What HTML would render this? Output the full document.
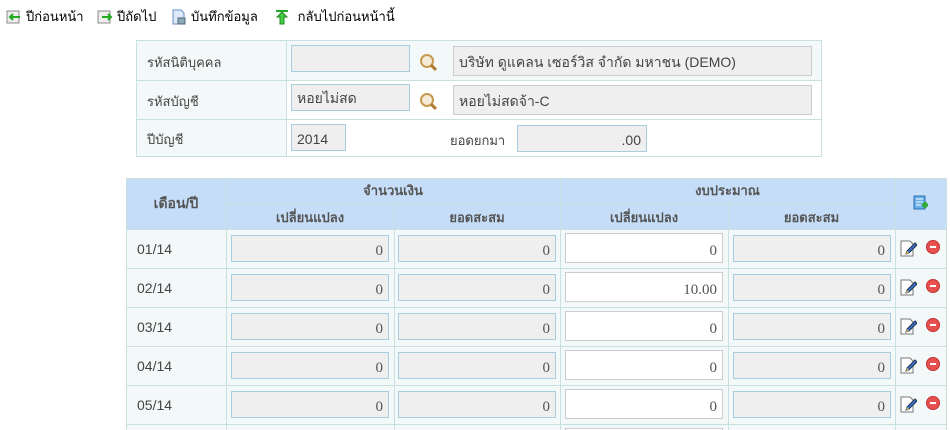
<!DOCTYPE html>
<html style="overflow:hidden;height:430px"><head><meta charset="utf-8"><style>
body{margin:0;width:950px;height:430px;overflow:hidden;background:#fff;font-family:"Liberation Sans","Noto Sans CJK SC",sans-serif;font-size:13px;color:#333;position:relative}
.a{position:absolute;box-sizing:border-box}
.tb{top:6px;font-size:13px;color:#000;display:flex;align-items:center;gap:4px}
.ic{width:16px;height:16px;display:inline-block}
.in{position:absolute;box-sizing:border-box;background:#efefef;border:1px solid #a9cde0;padding:3px 5px 0;display:flex;align-items:center;font-size:14px;color:#444}
.in.n{border-color:#ccc}
.in.w{background:#fff;border-color:#ccc}
.r{justify-content:flex-end;font-family:"Liberation Serif",serif;font-size:15px;color:#555;padding-top:6px}
.line{position:absolute;background:#c8e0e0}
.hd{position:absolute;color:#555;font-weight:bold;font-size:13px;text-align:center}
.lb{position:absolute;font-size:13px;color:#444}
.mag{position:absolute;width:10px;height:10px;border:2px solid #c89a50;border-radius:50%;background:#f4ecd8}
.mag:after{content:"";position:absolute;width:3px;height:7px;background:#b07830;left:10px;top:8px;transform:rotate(-45deg)}
</style></head><body>
<div class="a tb" style="left:6px"><svg class="ic" viewBox="0 0 16 16"><rect x="1" y="2" width="12" height="12" fill="#eee" stroke="#888"/><path d="M4 8h10M7 5l-3 3 3 3" stroke="#2a2" stroke-width="2" fill="none"/></svg>ปีก่อนหน้า</div>
<div class="a tb" style="left:97px"><svg class="ic" viewBox="0 0 16 16"><rect x="1" y="2" width="12" height="12" fill="#eee" stroke="#888"/><path d="M5 8h9M11 5l3 3-3 3" stroke="#2a2" stroke-width="2" fill="none"/></svg>ปีถัดไป</div>
<div class="a tb" style="left:171px"><svg class="ic" viewBox="0 0 16 16"><path d="M2 1h8l3 3v11H2z" fill="#dde8f8" stroke="#6890c8"/><rect x="7" y="9" width="7" height="6" fill="#8ab" stroke="#567"/></svg>บันทึกข้อมูล</div>
<div class="a tb" style="left:274px"><svg class="ic" viewBox="0 0 16 16"><rect x="2" y="1" width="12" height="2" fill="#2a2"/><path d="M8 3l-5 5h3v7h4V8h3z" fill="#4c4" stroke="#282"/></svg>&nbsp;กลับไปก่อนหน้านี้</div>

<div class="a" style="left:136px;top:40px;width:686px;height:117px;border:1px solid #c8e0e0;background:#fff"></div>
<div class="a" style="left:137px;top:41px;width:684px;height:39px;background:#f3f9f9"></div>
<div class="a" style="left:137px;top:41px;width:149px;height:115px;background:#f3f9f9"></div>
<div class="line" style="left:136px;top:80px;width:686px;height:1px"></div>
<div class="line" style="left:136px;top:119px;width:686px;height:1px"></div>
<div class="line" style="left:286px;top:40px;width:1px;height:117px"></div>
<div class="lb" style="left:147px;top:52px">รหัสนิติบุคคล</div>
<div class="lb" style="left:147px;top:91px">รหัสบัญชี</div>
<div class="lb" style="left:147px;top:129px">ปีบัญชี</div>
<div class="in" style="left:291px;top:45px;width:119px;height:27px"></div>
<div class="mag" style="left:420px;top:54px"></div>
<div class="in n" style="left:453px;top:46px;width:359px;height:30px">บริษัท ดูแคลน เซอร์วิส จำกัด มหาชน (DEMO)</div>
<div class="in" style="left:291px;top:84px;width:119px;height:27px">หอยไม่สด</div>
<div class="mag" style="left:420px;top:93px"></div>
<div class="in n" style="left:453px;top:85px;width:359px;height:30px">หอยไม่สดจ้า-C</div>
<div class="in" style="left:291px;top:124px;width:55px;height:27px">2014</div>
<div class="lb" style="left:450px;top:130px">ยอดยกมา</div>
<div class="in" style="left:517px;top:125px;width:130px;height:27px;justify-content:flex-end">.00</div>

<div class="a" style="left:126px;top:178px;width:821px;height:252px;border:1px solid #c8e0e0;border-bottom:0;background:#f3f9f9"></div>
<div class="a" style="left:127px;top:179px;width:819px;height:50px;background:#c6ddf7"></div>
<div class="line" style="left:226px;top:203px;width:669px;height:1px"></div>
<div class="line" style="left:126px;top:229px;width:821px;height:1px"></div>
<div class="line" style="left:126px;top:268px;width:821px;height:1px"></div>
<div class="line" style="left:126px;top:307px;width:821px;height:1px"></div>
<div class="line" style="left:126px;top:346px;width:821px;height:1px"></div>
<div class="line" style="left:126px;top:385px;width:821px;height:1px"></div>
<div class="line" style="left:126px;top:424px;width:821px;height:1px"></div>
<div class="line" style="left:226px;top:178px;width:1px;height:252px"></div>
<div class="line" style="left:394px;top:203px;width:1px;height:227px"></div>
<div class="line" style="left:560px;top:178px;width:1px;height:252px"></div>
<div class="line" style="left:728px;top:203px;width:1px;height:227px"></div>
<div class="line" style="left:895px;top:178px;width:1px;height:252px"></div>
<div class="hd" style="left:126px;top:193px;width:100px;font-size:14px">เดือน/ปี</div>
<div class="hd" style="left:226px;top:180px;width:334px">จำนวนเงิน</div>
<div class="hd" style="left:560px;top:180px;width:335px">งบประมาณ</div>
<div class="hd" style="left:226px;top:207px;width:168px">เปลี่ยนแปลง</div>
<div class="hd" style="left:394px;top:207px;width:166px">ยอดสะสม</div>
<div class="hd" style="left:560px;top:207px;width:168px">เปลี่ยนแปลง</div>
<div class="hd" style="left:728px;top:207px;width:167px">ยอดสะสม</div>
<svg class="a" style="left:913px;top:195px" width="16" height="16" viewBox="0 0 16 16"><rect x="1" y="1" width="11" height="13" fill="#6ab0e8" stroke="#2a70b0"/><path d="M3 4h7M3 7h7M3 10h5" stroke="#fff"/><path d="M9 10h6M12 7v6" stroke="#3a3" stroke-width="3"/></svg>
<div class="a" style="left:565px;top:428px;width:158px;height:2px;border:1px solid #ccc;border-bottom:0;background:#fff"></div>

<div id="rows"></div>
<script>
var d=[["01/14","0"],["02/14","10.00"],["03/14","0"],["04/14","0"],["05/14","0"]];
var h="";
d.forEach(function(r,i){var y=229+i*39;
h+='<div class="lb" style="left:137px;top:'+(y+12)+'px;font-size:14px;font-family:Liberation Sans,sans-serif">'+r[0]+'</div>';
h+='<div class="in r" style="left:231px;top:'+(y+6)+'px;width:158px;height:27px">0</div>';
h+='<div class="in r" style="left:398px;top:'+(y+6)+'px;width:158px;height:27px">0</div>';
h+='<div class="in w r" style="left:565px;top:'+(y+4)+'px;width:158px;height:30px">'+r[1]+'</div>';
h+='<div class="in r" style="left:733px;top:'+(y+6)+'px;width:158px;height:27px">0</div>';
h+='<svg class="a" style="left:900px;top:'+(y+11)+'px" width="17" height="17" viewBox="0 0 17 17"><path d="M1 1h9l3 3v12H1z" fill="#fff" stroke="#777"/><path d="M6 14l1-3 8-8 2 2-8 8z" fill="#3a70d0" stroke="#234"/><path d="M6 14l1-3 2 2z" fill="#e8c070"/></svg>';
h+='<div class="a" style="left:926px;top:'+(y+11)+'px;width:14px;height:14px;border-radius:50%;background:#e85050;border:1px solid #c03030"><div class="a" style="left:3px;top:5px;width:6px;height:2px;background:#fff"></div></div>';
});
document.getElementById("rows").innerHTML=h;
</script>
</body></html>
